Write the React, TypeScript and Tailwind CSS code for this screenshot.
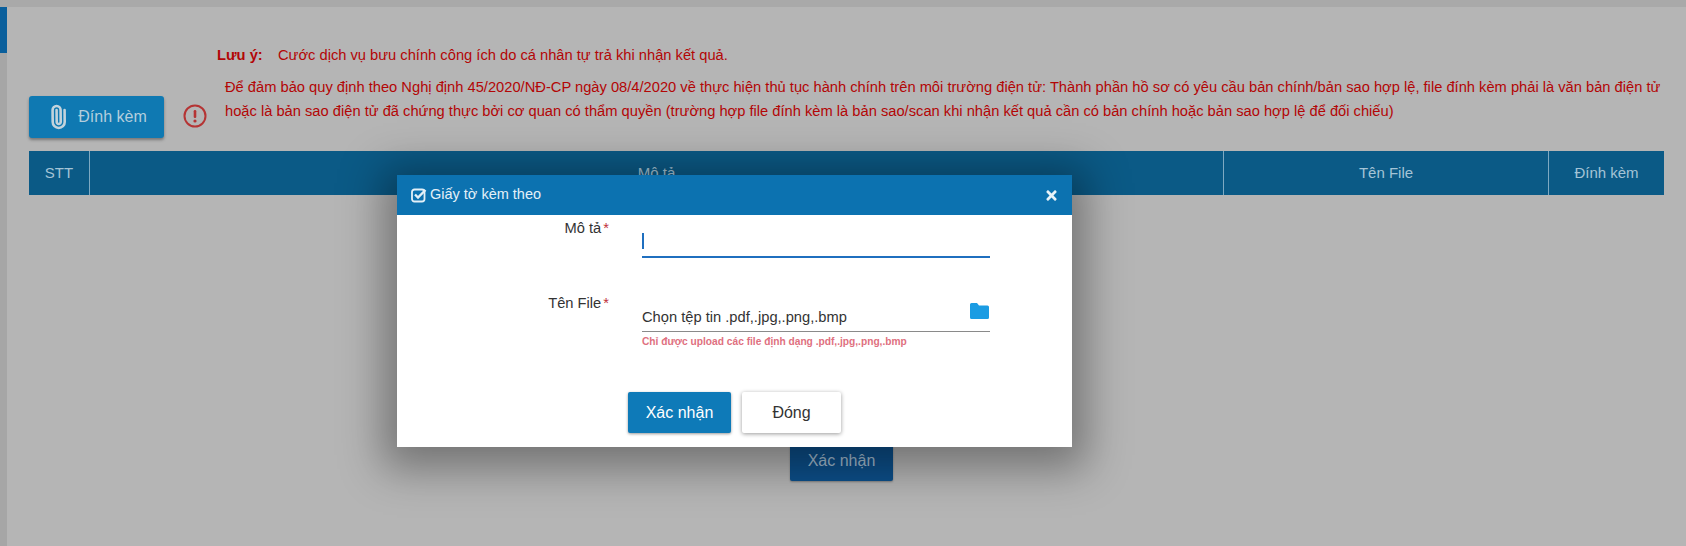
import React from 'react';
import { Paperclip } from 'lucide-react';
import { FaTimes } from 'react-icons/fa';

const App: React.FC = () => {
  return (
    <div className="relative h-[546px] w-[1686px] overflow-hidden bg-[#b5b5b5] font-['Liberation_Sans',Arial,sans-serif]">
      {/* Top bar */}
      <div className="h-[7px] bg-[#a9a9a9]" />

      <div className="flex h-[539px]">
        {/* Left rail */}
        <div className="w-[7px] shrink-0 bg-[#a6a6a6]">
          <div className="h-[46px] bg-[#0a5f9c]" />
        </div>

        <div className="flex min-w-0 flex-1 flex-col pl-[22px] pr-[22px]">
          {/* Notes */}
          <div className="flex h-[144px] shrink-0 flex-col">
            <div className="ml-[188px] mt-[40px] flex text-[14.7px] leading-[16px] text-[#b30606]">
              <span className="w-[61px] font-bold">Lưu ý:</span>
              <span>Cước dịch vụ bưu chính công ích do cá nhân tự trả khi nhận kết quả.</span>
            </div>
            <div className="mt-[12px] flex items-end">
              <button className="mb-[-1px] flex h-[42px] w-[135px] shrink-0 items-center justify-center gap-[8px] rounded-[3px] bg-[#0f79b2] text-[16px] text-[#b4cedd] shadow-[0_2px_3px_rgba(0,0,0,0.35)]">
                <Paperclip size={24} strokeWidth={2.6} className="rotate-[-45deg] text-[#c3d3dc]" />
                Đính kèm
              </button>
              <svg width="24" height="24" viewBox="0 0 24 24" className="mb-[9px] ml-[19px] shrink-0 text-[#b53434]">
                <circle cx="12" cy="12" r="10.5" fill="none" stroke="currentColor" strokeWidth="2" />
                <rect x="10.7" y="6" width="2.6" height="8" rx="1.2" fill="currentColor" />
                <circle cx="12" cy="17" r="1.6" fill="currentColor" />
              </svg>
              <p className="mb-[14px] ml-[18px] w-[1445px] shrink-0 text-[14.7px] leading-[24px] text-[#b30606]">
                Để đảm bảo quy định theo Nghị định 45/2020/NĐ-CP ngày 08/4/2020 về thực hiện thủ tục hành chính trên môi trường điện tử: Thành phần hồ sơ có yêu cầu bản chính/bản sao hợp lệ, file đính kèm phải là văn bản điện tử hoặc là bản sao điện tử đã chứng thực bởi cơ quan có thẩm quyền (trường hợp file đính kèm là bản sao/scan khi nhận kết quả cần có bản chính hoặc bản sao hợp lệ để đối chiếu)
              </p>
            </div>
          </div>

          {/* Table header */}
          <div className="flex h-[44px] w-[1635px] shrink-0 items-center bg-[#0b5a86] text-[15px] text-[#a4c4d6]">
            <div className="flex h-full w-[61px] items-center justify-center border-r border-[#7ea9c2]">STT</div>
            <div className="flex h-full w-[1134px] items-center justify-center border-r border-[#7ea9c2]">Mô tả</div>
            <div className="flex h-full w-[325px] items-center justify-center border-r border-[#7ea9c2]">Tên File</div>
            <div className="flex h-full flex-1 items-center justify-center">Đính kèm</div>
          </div>

          <div className="flex flex-1 justify-center pr-[10px] pt-[245px]">
            <button className="h-[41px] w-[103px] rounded-[2px] bg-[#0c4f8a] text-[16px] text-[#a4bed2] shadow-[0_1px_2px_rgba(0,0,0,0.3)]">
              Xác nhận
            </button>
          </div>
        </div>
      </div>

      {/* Modal */}
      <div className="absolute left-[397px] top-[175px] w-[675px] bg-white shadow-[0_8px_40px_14px_rgba(0,0,0,0.36)]">
        <div className="flex h-[40px] items-center justify-between bg-[#0c72b0] pl-[14px] pr-[13px] text-[14.5px] text-[#e3f0f8]">
          <div className="flex items-center gap-[3px]">
            <svg width="16" height="16" viewBox="0 0 16 16" fill="none" stroke="currentColor">
              <rect x="1" y="2.5" width="12.5" height="12" rx="2.5" strokeWidth="1.8" />
              <path d="M4 7.5l3 3L14.5 3" strokeWidth="2.4" />
            </svg>
            <span>Giấy tờ kèm theo</span>
          </div>
          <FaTimes size={15} className="text-[#e8f2f8]" />
        </div>

        <div className="h-[232px]">
          {/* Mô tả */}
          <div className="flex pt-[4px]">
            <label className="w-[212px] text-right text-[14.7px] leading-[18px] text-[#333]">
              Mô tả<span className="ml-[2px] text-[#c0303a]">*</span>
            </label>
            <div className="ml-[33px] mt-[12px] h-[27px] w-[348px] border-b-2 border-[#1f6fbf] pt-[2px]">
              <div className="h-[16px] w-[2px] bg-[#1f6fbf]" />
            </div>
          </div>

          {/* Tên File */}
          <div className="mt-[36px] flex">
            <label className="w-[212px] text-right text-[14.7px] leading-[18px] text-[#333]">
              Tên File<span className="ml-[2px] text-[#c0303a]">*</span>
            </label>
            <div className="ml-[33px] w-[348px]">
              <div className="flex h-[38px] items-end justify-between border-b border-[#8a8a8a] pb-[5px] text-[14.7px] leading-[18px] text-[#333]">
                <span>Chọn tệp tin .pdf,.jpg,.png,.bmp</span>
                <svg width="19" height="16" viewBox="0 0 19 16" className="mb-[7px] mr-[1px]">
                  <path d="M1.5 0h5.5l2 2.5h8.5a1.5 1.5 0 0 1 1.5 1.5v10.5a1.5 1.5 0 0 1-1.5 1.5H1.5A1.5 1.5 0 0 1 0 14.5V1.5A1.5 1.5 0 0 1 1.5 0z" fill="#1b9ce3" />
                </svg>
              </div>
              <p className="mt-[4px] text-[10.2px] font-bold leading-[12px] text-[#e07080]">
                Chỉ được upload các file định dạng .pdf,.jpg,.png,.bmp
              </p>
            </div>
          </div>

          {/* Actions */}
          <div className="mt-[44px] flex gap-[11px] pl-[231px]">
            <button className="h-[41px] w-[103px] rounded-[2px] bg-[#0e7ab8] text-[16px] text-white shadow-[0_1px_3px_rgba(0,0,0,0.4)]">
              Xác nhận
            </button>
            <button className="h-[41px] w-[99px] rounded-[2px] bg-white text-[16px] text-[#333] shadow-[0_1px_4px_rgba(0,0,0,0.4)]">
              Đóng
            </button>
          </div>
        </div>
      </div>
    </div>
  );
};

export default App;
